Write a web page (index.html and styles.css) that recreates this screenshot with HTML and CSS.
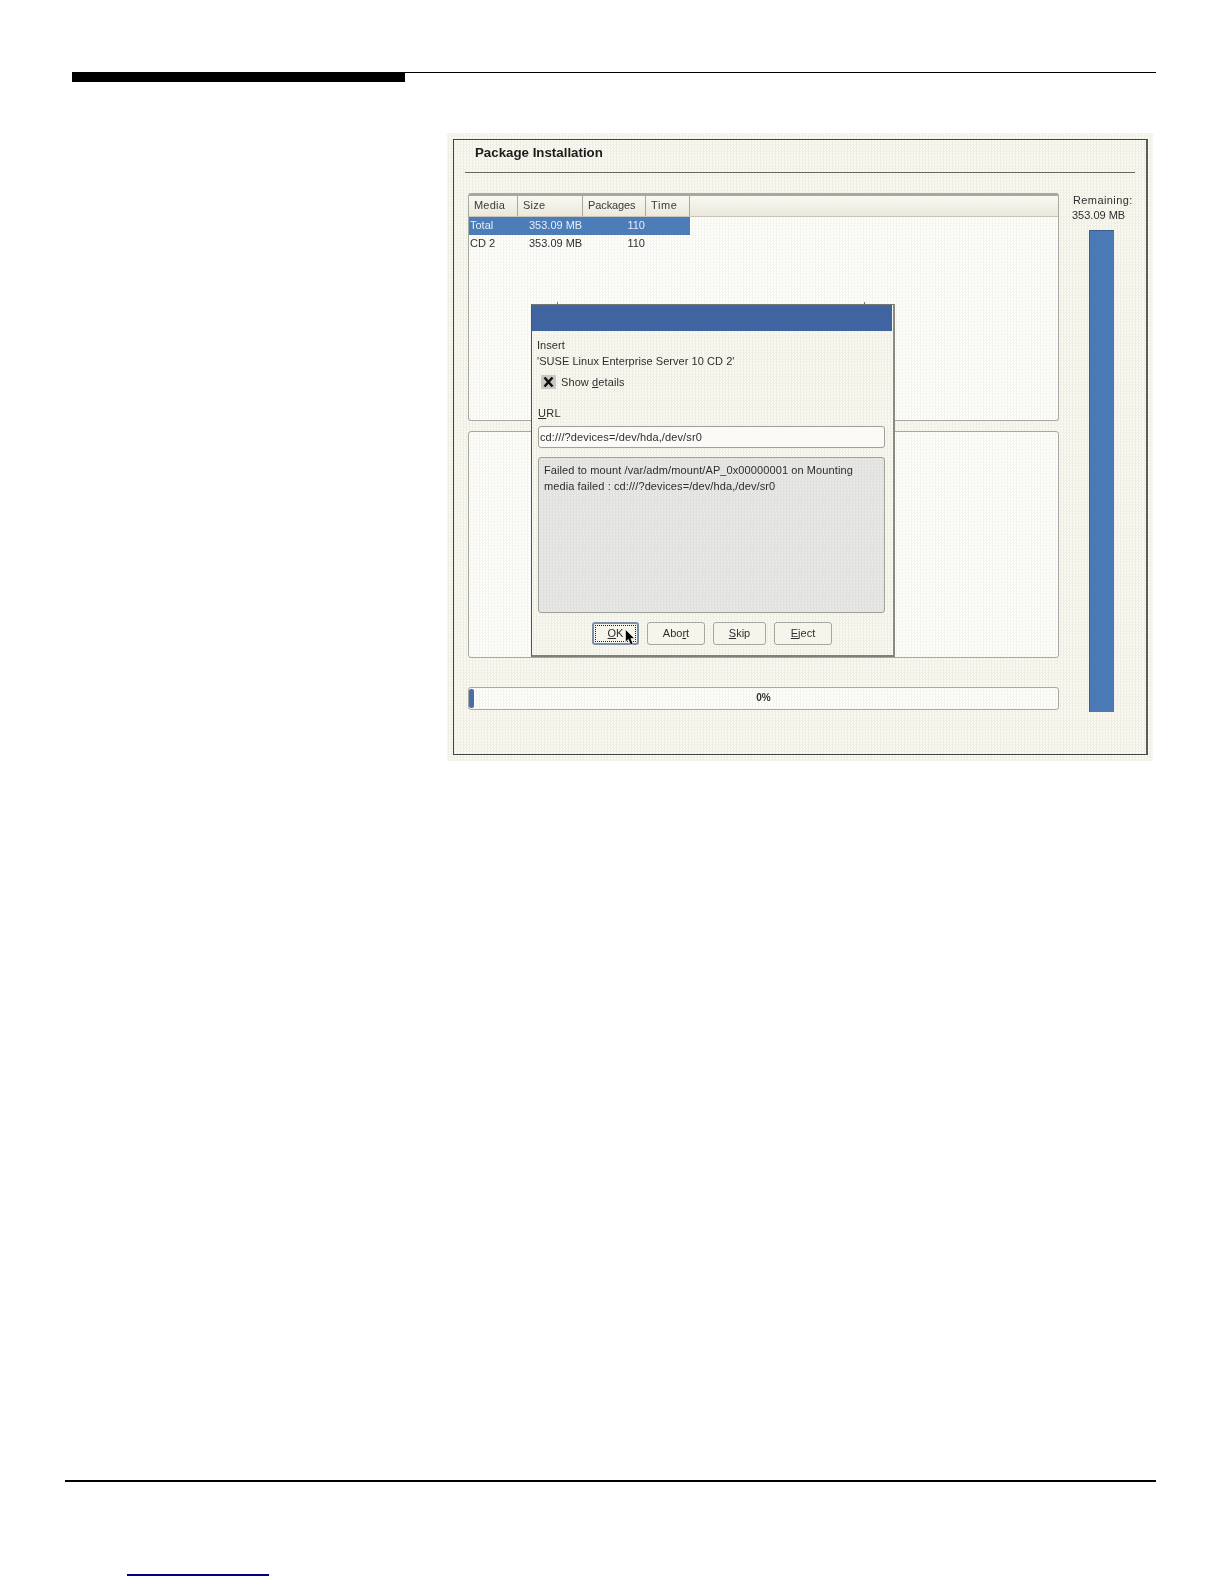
FILE: index.html
```html
<!DOCTYPE html>
<html lang="en">
<head>
<meta charset="utf-8">
<title>Package Installation</title>
<link rel="stylesheet" href="styles.css">
</head>
<body>
<header class="page-head">
  <div class="head-block"></div>
  <div class="head-line"></div>
</header>

<main class="shot dither">
  <div class="frame">
    <h1 class="title">Package Installation</h1>
    <div class="title-rule"></div>
    <div class="content">
      <div class="left-col">
        <section class="panel table-panel dither-light">
          <div class="table-head">
            <div class="th th-media">Media</div>
            <div class="th th-size">Size</div>
            <div class="th th-pack">Packages</div>
            <div class="th th-time">Time</div>
            <div class="th-fill"></div>
          </div>
          <div class="row selected">
            <div class="c-media">Total</div><div class="c-size">353.09 MB</div><div class="c-pack">110</div><div></div>
          </div>
          <div class="row">
            <div class="c-media">CD 2</div><div class="c-size">353.09 MB</div><div class="c-pack">110</div><div></div>
          </div>
        </section>
        <section class="panel log-panel dither-light"></section>
        <div class="progress dither-light">
          <div class="progress-fill"></div>
          <div class="progress-label">0%</div>
        </div>
      </div>
      <aside class="right-col">
        <div class="remaining">Remaining:</div>
        <div class="remaining-val">353.09 MB</div>
        <div class="remaining-bar"></div>
      </aside>
    </div>

    <div class="dialog dither">
      <div class="dialog-title"></div>
      <div class="dialog-body">
        <div class="msg">Insert</div>
        <div class="msg">'SUSE Linux Enterprise Server 10 CD 2'</div>
        <label class="check">
          <svg class="check-box" viewBox="0 0 15 14" aria-hidden="true">
            <rect width="15" height="14" fill="#c9c9c5"/>
            <path class="check-x" d="M3.5 2.5 L11.5 11.5 M11.5 2.5 L3.5 11.5"/>
          </svg>
          <span>Show <u>d</u>etails</span>
        </label>
        <div class="url-label"><u>U</u>RL</div>
        <div class="url-input">cd:///?devices=/dev/hda,/dev/sr0</div>
        <div class="details">Failed to mount /var/adm/mount/AP_0x00000001 on Mounting<br>media failed : cd:///?devices=/dev/hda,/dev/sr0</div>
        <div class="buttons">
          <div class="btn btn-ok"><span class="focus"><u>O</u>K</span>
            <svg class="cursor" viewBox="0 0 11 17" aria-hidden="true"><path d="M0.5 0.5 V13 L3.4 10.4 L5.6 15.8 L8 14.8 L5.8 9.6 H9.6 Z" fill="#000" stroke="#fff" stroke-width="0.6"/></svg>
          </div>
          <div class="btn btn-abort">Abo<u>r</u>t</div>
          <div class="btn btn-skip"><u>S</u>kip</div>
          <div class="btn btn-eject"><u>E</u>ject</div>
        </div>
      </div>
    </div>
  </div>
</main>

<footer class="page-foot">
  <div class="foot-rule"></div>
  <div class="foot-link"></div>
</footer>
</body>
</html>
```

FILE: styles.css
```css
* { box-sizing: border-box; }
html, body { margin: 0; padding: 0; background: #fff; }
body {
  width: 1224px;
  height: 1584px;
  overflow: hidden;
  font-family: "Liberation Sans", Arial, sans-serif;
  font-size: 11px;
  color: #2e2e2e;
}

.page-head { display: flex; margin: 72px 68px 0 72px; align-items: flex-start; height: 10px; }
.head-block { width: 333px; height: 10px; background: #000; }
.head-line { flex: 1; height: 1px; background: #000; }

.dither {
  background-color: #f6f5ec;
  background-image: conic-gradient(#efeee3 25%, #fbfaf4 0 50%, #efeee3 0 75%, #fbfaf4 0);
  background-size: 3px 3px;
}
.dither-light {
  background-color: #fbfaf6;
  background-image: conic-gradient(#f5f4ed 25%, #fff 0 50%, #f5f4ed 0 75%, #fff 0);
  background-size: 3px 3px;
}

.shot { width: 706px; height: 628px; margin: 51px 0 0 447px; padding: 6px 5px 6px 6px; filter: blur(0.4px); }
.frame {
  position: relative;
  width: 695px;
  height: 616px;
  border: 1px solid #444;
  border-right: 2px solid #5a5a5a;
}
.title { margin: 0; padding: 3px 0 0 21px; height: 32px; font-size: 13.3px; line-height: 20px; font-weight: 700; color: #1c1c1c; }
.title-rule { height: 1px; margin: 0 11px; background: #66665e; }
.content { display: flex; margin-top: 20px; padding-left: 14px; gap: 14px; }

.left-col { width: 591px; display: flex; flex-direction: column; }
.panel { height: 227px; border: 1px solid #a8a8a2; border-radius: 3px; }
.table-panel { height: 228px; border-top: 3px solid #a8a8a0; }
.log-panel { margin-top: 10px; }

.table-head { display: flex; height: 21px; background: linear-gradient(#f9f8f1, #ebe8dc); border-bottom: 1px solid #c8c6ba; }
.th { padding-left: 5px; line-height: 18px; letter-spacing: 0.2px; color: #3a3a3a; border-right: 1px solid #a8a8a0; }
.th-media { width: 49px; }
.th-size { width: 65px; }
.th-pack { width: 63px; letter-spacing: -0.1px; }
.th-time { width: 44px; letter-spacing: 0.6px; }
.th-fill { flex: 1; }

.row { display: grid; grid-template-columns: 49px 65px 63px 44px; width: 221px; height: 18px; line-height: 17px; }
.row.selected { background: #4d7db9; color: #e6edf5; }
.c-media { padding-left: 1px; }
.c-size { padding-left: 11px; white-space: nowrap; }
.c-pack { text-align: right; padding-right: 1px; }

.progress { position: relative; height: 23px; margin-top: 29px; border: 1px solid #a8a8a2; border-radius: 3px; }
.progress-fill { width: 5px; height: 19px; margin: 1px 0 0; background: #4a6ea8; border-radius: 2px; }
.progress-label { position: absolute; inset: 0; text-align: center; line-height: 20px; font-weight: 700; font-size: 10px; color: #333; }

.right-col { width: 62px; }
.remaining { line-height: 15px; letter-spacing: 0.4px; white-space: nowrap; }
.remaining-val { line-height: 15px; margin-left: -1px; white-space: nowrap; }
.remaining-bar { width: 25px; height: 482px; margin: 7px 0 0 16px; background: #4a79b5; border-left: 1px solid #3d5f90; border-top: 1px solid #3d5f90; }

.dialog {
  position: absolute;
  left: 77px;
  top: 164px;
  width: 364px;
  height: 353px;
  border-left: 1px solid #555;
  border-right: 2px solid #8a8a84;
  border-top: 1px solid #777;
  border-bottom: 2px solid #80807a;
}
.dialog::before, .dialog::after {
  content: "";
  position: absolute;
  top: -3px;
  width: 1px;
  height: 3px;
  background: #777;
}
.dialog::before { left: 25px; }
.dialog::after { right: 28px; }
.dialog-title { height: 26px; margin-right: 1px; background: #3f64a0; }
.dialog-body { padding: 6px 8px 0 6px; }
.msg { line-height: 16px; margin-left: -1px; white-space: nowrap; letter-spacing: 0.05px; }
.check { display: flex; align-items: center; gap: 5px; height: 14px; margin: 6px 0 0 3px; letter-spacing: 0.1px; }
.check-box { width: 15px; height: 14px; flex: none; }
.check-x { stroke: #111; stroke-width: 2.6; fill: none; }
.url-label { margin-top: 17px; height: 15px; line-height: 15px; letter-spacing: 0.3px; }
.url-input { height: 22px; margin-top: 5px; padding-left: 1px; border: 1px solid #a0a09a; border-radius: 3px; line-height: 20px; background: #fbfaf6; letter-spacing: 0.12px; }
.details {
  height: 156px;
  margin-top: 9px;
  padding: 4px 0 0 5px;
  border: 1px solid #a0a09a;
  border-radius: 3px;
  line-height: 16px;
  letter-spacing: 0.1px;
  white-space: nowrap;
  background-color: #e4e4e2;
  background-image: conic-gradient(#e0e0de 25%, #e9e9e7 0 50%, #e0e0de 0 75%, #e9e9e7 0);
  background-size: 3px 3px;
}
.buttons { display: flex; gap: 8px; margin: 9px 0 0 54px; }
.btn { position: relative; height: 23px; border: 1px solid #a6a6a0; border-radius: 3px; text-align: center; line-height: 21px; background: #f6f5ec; }
.btn-ok { width: 47px; border: 2px solid #7d8fa6; padding: 1px; line-height: 17px; }
.focus { display: block; height: 17px; border: 1px dotted #222; line-height: 15px; }
.btn-abort { width: 58px; }
.btn-skip { width: 53px; }
.btn-eject { width: 58px; }
.cursor { position: absolute; left: 31px; top: 5px; width: 11px; height: 17px; }

.foot-rule { height: 2px; margin: 719px 68px 0 65px; background: #000; }
.foot-link { width: 142px; height: 2px; margin: 92px 0 0 127px; background: #000080; }
```
